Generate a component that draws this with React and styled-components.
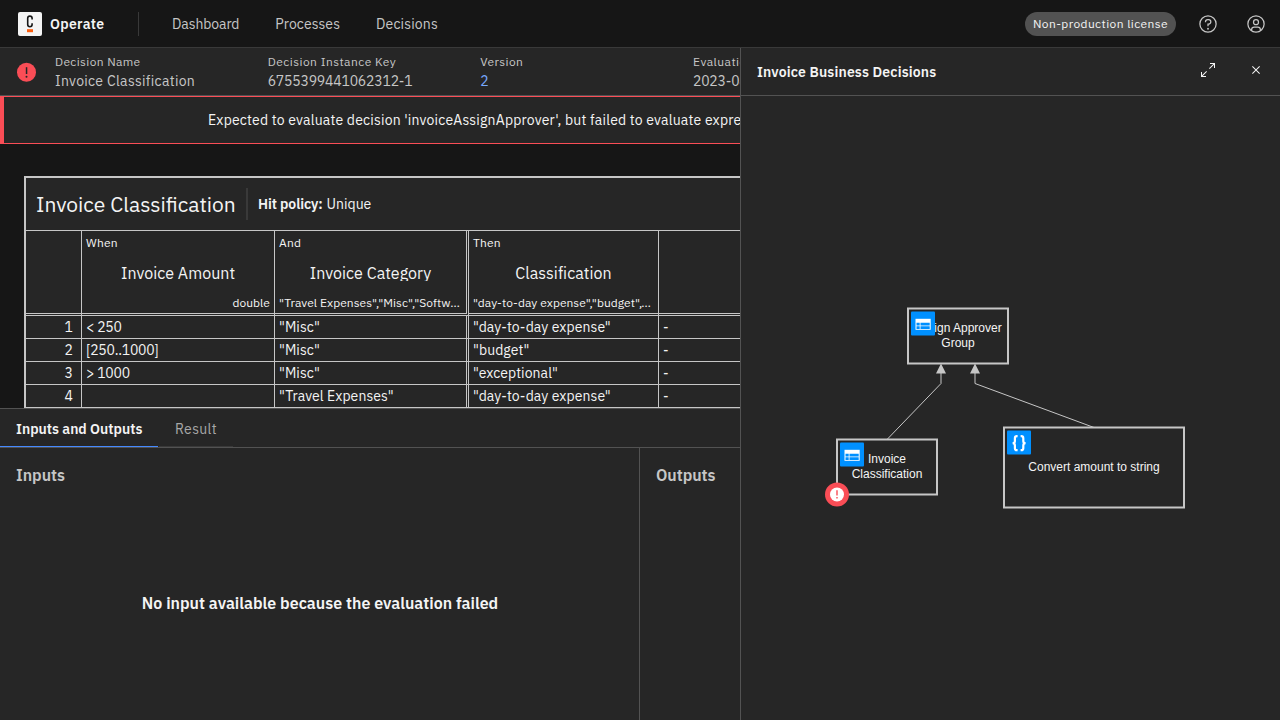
import React from "react";
import styled, { createGlobalStyle } from "styled-components";

const GlobalStyle = createGlobalStyle`
  *, *::before, *::after { box-sizing: border-box; }
  body {
    margin: 0;
    background: #161616;
    color: #f4f4f4;
    font-family: "IBM Plex Sans", Roboto, "Liberation Sans", sans-serif;
    font-size: 14px;
    line-height: 18px;
    letter-spacing: 0.16px;
  }
  svg { flex: none; }
`;

const Page = styled.div`
  display: flex;
  flex-direction: column;
  width: 1280px;
  height: 720px;
  overflow: hidden;
`;

/* Top navigation */
const Header = styled.header`
  display: flex;
  align-items: center;
  height: 48px;
  flex: none;
  padding-left: 18px;
  border-bottom: 1px solid #393939;
`;
const ProductName = styled.a`
  margin-left: 8px;
  width: 88px;
  font-weight: 600;
  letter-spacing: 0.28px;
`;
const HeaderDivider = styled.span`
  width: 1px;
  height: 24px;
  margin-right: 17px;
  background: #393939;
`;
const Nav = styled.nav`
  display: flex;
  flex: 1;
`;
const NavLink = styled.a`
  padding: 0 16px;
  margin-right: 4px;
  color: #c6c6c6;
  letter-spacing: ${(p) => p.$tracking}px;
`;
const LicenseTag = styled.span`
  display: flex;
  align-items: center;
  height: 24px;
  padding: 0 8px;
  border-radius: 12px;
  background: #525252;
  font-size: 12px;
  letter-spacing: 0.4px;
`;
const HeaderAction = styled.button`
  display: grid;
  place-items: center;
  width: 48px;
  height: 47px;
  padding: 0;
  border: 0;
  background: none;
  color: #c6c6c6;
`;
const HeaderActions = styled.div`
  display: flex;
  align-items: center;
  margin-left: 8px;
`;

/* Body */
const Body = styled.main`
  display: flex;
  flex: 1;
  min-height: 0;
`;
const Content = styled.section`
  display: flex;
  flex-direction: column;
  width: 740px;
  overflow: hidden;
`;
const InstanceHeader = styled.div`
  display: flex;
  align-items: center;
  flex: none;
  height: 48px;
  padding-left: 17px;
  background: #262626;
  border-bottom: 1px solid #525252;
`;
const Details = styled.dl`
  display: grid;
  grid-template-columns: repeat(4, 212.67px);
  flex: none;
  margin: 1px 0 0 19px;
`;
const Detail = styled.div`
  white-space: nowrap;
`;
const DetailLabel = styled.dt`
  font-size: 12px;
  line-height: 16px;
  letter-spacing: ${(p) => (p.$wide ? 0.46 : 0.36)}px;
  color: #c6c6c6;
`;
const DetailValue = styled.dd`
  margin: 1px 0 0;
  line-height: 20px;
  letter-spacing: ${(p) => (p.$numeric ? -0.2 : 0.31)}px;
  color: ${(p) => (p.$link ? "#78a9ff" : "#c6c6c6")};
`;
const ErrorBanner = styled.div`
  flex: none;
  height: 48px;
  padding-left: 204px;
  border: 1px solid #fa4d56;
  border-width: 1px 0 1px 4px;
  background: #262626;
  line-height: 46px;
  letter-spacing: 0.185px;
  white-space: nowrap;
`;
const TableViewport = styled.div`
  flex: none;
  height: 264px;
  padding: 32px 0 0 24px;
  overflow: hidden;
`;

/* Decision table */
const Decision = styled.div`
  width: 900px;
  border: 2px solid #c6c6c6;
  background: #262626;
  letter-spacing: 0;
`;
const DecisionHeader = styled.div`
  display: flex;
  align-items: center;
  height: 52px;
  padding-left: 10px;
`;
const DecisionTitle = styled.h3`
  margin: 0;
  width: 210px;
  font-size: 21px;
  font-weight: 400;
`;
const HitPolicy = styled.div`
  display: flex;
  align-items: center;
  gap: 4px;
  height: 32px;
  padding-left: 10px;
  border-left: 2px solid #393939;
`;
const HitPolicyLabel = styled.span`
  font-weight: 600;
  letter-spacing: -0.1px;
`;
const Grid = styled.table`
  border-collapse: separate;
  border-spacing: 0;
  table-layout: fixed;
  width: 896px;
`;
const Col = styled.col`
  width: ${(p) => p.$w}px;
`;
const Th = styled.th`
  height: 86px;
  padding: 0;
  vertical-align: top;
  font-weight: 400;
  text-align: left;
  border-top: 1px solid #c6c6c6;
  border-bottom: 3px double #c6c6c6;
  border-right: ${(p) => (p.$double ? "3px double" : "1px solid")} #c6c6c6;
`;
const Clause = styled.div`
  padding: 4px 4px 0;
  font-size: 12px;
  line-height: 16px;
  letter-spacing: 0.2px;
`;
const ClauseName = styled.div`
  margin-top: 13px;
  height: 17px;
  overflow: hidden;
  text-align: center;
  font-size: 16px;
  line-height: 18px;
  letter-spacing: 0.04px;
`;
const ClauseType = styled.div`
  margin-top: 14px;
  padding: 0 4px;
  font-size: 12px;
  line-height: 16px;
  letter-spacing: 0.04px;
  text-align: ${(p) => (p.$right ? "right" : "left")};
  white-space: nowrap;
  overflow: hidden;
  text-overflow: ellipsis;
`;
const Td = styled.td`
  height: 23px;
  padding: 0 ${(p) => (p.$index ? 8 : 4)}px 0 4px;
  line-height: 22px;
  letter-spacing: ${(p) => (p.$numeric ? -0.25 : 0.07)}px;
  text-align: ${(p) => (p.$index ? "right" : "left")};
  white-space: nowrap;
  border-bottom: 1px solid #c6c6c6;
  border-right: ${(p) => (p.$double ? "3px double" : "1px solid")} #c6c6c6;
`;

/* Lower panel */
const LowerPanel = styled.div`
  display: flex;
  flex-direction: column;
  flex: 1;
  background: #262626;
  border-top: 1px solid #525252;
`;
const Tabs = styled.div`
  display: flex;
  align-items: flex-end;
  gap: 1px;
  height: 39px;
  flex: none;
  border-bottom: 1px solid #525252;
`;
const Tab = styled.button`
  width: ${(p) => p.$w}px;
  height: 38px;
  padding: 3px 0 0 16px;
  border: 0;
  border-bottom: 1px solid ${(p) => (p.$selected ? "#4589ff" : "#393939")};
  background: none;
  text-align: left;
  font: inherit;
  font-weight: ${(p) => (p.$selected ? 600 : 400)};
  letter-spacing: ${(p) => (p.$selected ? 0 : 0.35)}px;
  color: ${(p) => (p.$selected ? "#f4f4f4" : "#a8a8a8")};
`;
const Panels = styled.div`
  display: flex;
  flex: 1;
`;
const Panel = styled.div`
  display: flex;
  flex-direction: column;
  width: 640px;
  flex: none;
  padding: 15px 16px 0;
  border-right: 1px solid #525252;
  font-size: 16px;
  letter-spacing: 0;
`;
const PanelTitle = styled.h2`
  margin: 0;
  font-size: 16px;
  line-height: 24px;
  font-weight: 600;
  letter-spacing: -0.05px;
  color: #c6c6c6;
`;
const EmptyMessage = styled.div`
  display: flex;
  align-items: center;
  justify-content: center;
  flex: 1;
  padding: 0 0 1px 1px;
  font-weight: 600;
  letter-spacing: 0.02px;
`;

/* Diagram side panel */
const SidePanel = styled.aside`
  display: flex;
  flex-direction: column;
  width: 540px;
  background: #262626;
  border-left: 1px solid #525252;
`;
const SideHeader = styled.div`
  display: flex;
  align-items: center;
  height: 48px;
  flex: none;
  padding-left: 16px;
  border-bottom: 1px solid #525252;
`;
const SideTitle = styled.h2`
  flex: 1;
  margin: 0;
  padding-top: 1px;
  font-size: 14px;
  font-weight: 600;
`;
const SideAction = styled(HeaderAction)`
  color: #f4f4f4;
  padding-bottom: 3px;
`;
const Diagram = styled.svg`
  display: block;
  width: 539px;
  height: 624px;
  font: 12px "Liberation Sans", Arial, sans-serif;
  letter-spacing: 0;
`;

const Icon = ({ size, children }) => (
  <svg width={size} height={size} viewBox="0 0 32 32" fill="currentColor">{children}</svg>
);

const Logo = () => (
  <svg width="24" height="24" viewBox="0 0 24 24">
    <rect width="24" height="24" rx="2" fill="#f4f4f4" />
    <path d="M14.1 7.6V6.3a2.2 2.2 0 0 0-4.4 0v6.2a2.2 2.2 0 0 0 4.4 0v-1.3" fill="none" stroke="#161616" strokeWidth="1.6" />
    <rect x="9" y="17.2" width="6" height="3" fill="#fc5d0d" />
  </svg>
);

const ErrorIcon = () => (
  <svg width="19" height="20" viewBox="0 -0.7 19 20">
    <circle cx="9.5" cy="9.5" r="9.5" fill="#fa4d56" />
    <path d="M8.8 4.5h1.5v6.8H8.8z" fill="#262626" />
    <circle cx="9.5" cy="14" r="1" fill="#262626" />
  </svg>
);

const TableBadge = ({ x, y }) => (
  <g transform={`translate(${x} ${y})`}>
    <rect width="24" height="24" rx="1" fill="#0090ff" />
    <rect x="4.5" y="7.3" width="15.2" height="11" fill="#fff" />
    <path d="M5.5 11.3h3.2v2.6H5.5zM9.5 11.3h9.2v2.6H9.5zM5.5 14.8h3.2v2.6H5.5zM9.5 14.8h9.2v2.6H9.5z" fill="#0090ff" />
  </g>
);

const Node = ({ x, y, w, h, lines, textY }) => (
  <g>
    <rect x={x} y={y} width={w} height={h} fill="#262626" stroke="#c6c6c6" strokeWidth="2" />
    {lines.map((line, i) => (
      <text key={line} x={x + w / 2} y={textY + i * 15} textAnchor="middle" fill="#f4f4f4">{line}</text>
    ))}
  </g>
);

const details = [
  { label: "Decision Name", value: "Invoice Classification" },
  { label: "Decision Instance Key", value: "6755399441062312-1", numeric: true },
  { label: "Version", value: "2", link: true },
  { label: "Evaluation Date", value: "2023-08-14 05:47:06", numeric: true },
];

const clauses = [
  ["When", "Invoice Amount", "double"],
  ["And", "Invoice Category", '"Travel Expenses","Misc","Software License Costs"'],
  ["Then", "Classification", '"day-to-day expense","budget","exceptional"'],
];

const rules = [
  ["< 250", '"Misc"', '"day-to-day expense"'],
  ["[250..1000]", '"Misc"', '"budget"'],
  ["> 1000", '"Misc"', '"exceptional"'],
  ["", '"Travel Expenses"', '"day-to-day expense"'],
];

export default function App() {
  return (
    <Page>
      <GlobalStyle />
      <Header>
        <Logo />
        <ProductName>Operate</ProductName>
        <HeaderDivider />
        <Nav>
          <NavLink $tracking={-0.1}>Dashboard</NavLink>
          <NavLink $tracking={0.08}>Processes</NavLink>
          <NavLink $tracking={0.15}>Decisions</NavLink>
        </Nav>
        <LicenseTag>Non-production license</LicenseTag>
        <HeaderActions>
          <HeaderAction aria-label="Help">
            <Icon size={20}>
              <path d="M16,2A14,14,0,1,0,30,16,14,14,0,0,0,16,2Zm0,26A12,12,0,1,1,28,16,12,12,0,0,1,16,28Z" />
              <circle cx="16" cy="23.5" r="1.5" />
              <path d="M17,8H15.5A4.49,4.49,0,0,0,11,12.5V13h2v-.5A2.5,2.5,0,0,1,15.5,10H17a2.5,2.5,0,0,1,0,5H15v4.5h2V17a4.5,4.5,0,0,0,0-9Z" />
            </Icon>
          </HeaderAction>
          <HeaderAction aria-label="Account">
            <Icon size={20}>
              <path d="M16,8a5,5,0,1,0,5,5A5,5,0,0,0,16,8Zm0,8a3,3,0,1,1,3-3A3.0034,3.0034,0,0,1,16,16Z" />
              <path d="M16,2A14,14,0,1,0,30,16,14.0158,14.0158,0,0,0,16,2ZM10,26.3765V25a3.0033,3.0033,0,0,1,3-3h6a3.0033,3.0033,0,0,1,3,3v1.3765a11.8989,11.8989,0,0,1-12,0Zm13.9925-1.4507A5.0016,5.0016,0,0,0,19,20H13a5.0016,5.0016,0,0,0-4.9925,4.9258,12,12,0,1,1,15.985,0Z" />
            </Icon>
          </HeaderAction>
        </HeaderActions>
      </Header>
      <Body>
        <Content>
          <InstanceHeader>
            <ErrorIcon />
            <Details>
              {details.map(({ label, value, link, numeric }) => (
                <Detail key={label}>
                  <DetailLabel $wide={numeric}>{label}</DetailLabel>
                  <DetailValue $link={link} $numeric={numeric}>{value}</DetailValue>
                </Detail>
              ))}
            </Details>
          </InstanceHeader>
          <ErrorBanner>
            Expected to evaluate decision 'invoiceAssignApprover', but failed to evaluate expression 'amount'
          </ErrorBanner>
          <TableViewport>
            <Decision>
              <DecisionHeader>
                <DecisionTitle>Invoice Classification</DecisionTitle>
                <HitPolicy>
                  <HitPolicyLabel>Hit policy:</HitPolicyLabel>
                  <span>Unique</span>
                </HitPolicy>
              </DecisionHeader>
              <Grid>
                <colgroup>
                  <Col $w={56} />
                  <Col $w={193} />
                  <Col $w={194} />
                  <Col $w={190} />
                  <Col $w={263} />
                </colgroup>
                <thead>
                  <tr>
                    <Th />
                    {clauses.map(([kind, name, type], i) => (
                      <Th key={kind} $double={i === 1}>
                        <Clause>{kind}</Clause>
                        <ClauseName>{name}</ClauseName>
                        <ClauseType $right={i === 0}>{type}</ClauseType>
                      </Th>
                    ))}
                    <Th />
                  </tr>
                </thead>
                <tbody>
                  {rules.map((cells, i) => (
                    <tr key={i}>
                      <Td $index>{i + 1}</Td>
                      {cells.map((cell, c) => (
                        <Td key={c} $double={c === 1} $numeric={c === 0}>{cell}</Td>
                      ))}
                      <Td>-</Td>
                    </tr>
                  ))}
                </tbody>
              </Grid>
            </Decision>
          </TableViewport>
          <LowerPanel>
            <Tabs>
              <Tab $selected $w={158}>Inputs and Outputs</Tab>
              <Tab $w={74}>Result</Tab>
            </Tabs>
            <Panels>
              <Panel>
                <PanelTitle>Inputs</PanelTitle>
                <EmptyMessage>No input available because the evaluation failed</EmptyMessage>
              </Panel>
              <Panel>
                <PanelTitle>Outputs</PanelTitle>
              </Panel>
            </Panels>
          </LowerPanel>
        </Content>
        <SidePanel>
          <SideHeader>
            <SideTitle>Invoice Business Decisions</SideTitle>
            <SideAction aria-label="Maximize">
              <Icon size={16}>
                <path d="M20 2 20 4 26.586 4 18 12.582 19.414 14 28 5.414 28 12 30 12 30 2 20 2z" />
                <path d="M14 19.416 12.592 18 4 26.586 4 20 2 20 2 30 12 30 12 28 5.414 28 14 19.416z" />
              </Icon>
            </SideAction>
            <SideAction aria-label="Close">
              <Icon size={16}>
                <path d="M17.4141 16 24 9.4141 22.5859 8 16 14.5859 9.4143 8 8 9.4141 14.5859 16 8 22.5859 9.4143 24 16 17.4141 22.5859 24 24 22.5859 17.4141 16z" />
              </Icon>
            </SideAction>
          </SideHeader>
          <Diagram viewBox="741 96 539 624">
            <g fill="none" stroke="#c6c6c6">
              <path d="M887 439.5L941 383.5V370" />
              <path d="M1094 427.5L975 383.5V370" />
            </g>
            <g fill="#c6c6c6">
              <path d="M941 363.5l5 10h-10z" />
              <path d="M975 363.5l5 10h-10z" />
            </g>
            <Node x={908} y={308.5} w={100} h={55} textY={332} lines={["Assign Approver", "Group"]} />
            <Node x={837} y={439.5} w={100} h={55} textY={463} lines={["Invoice", "Classification"]} />
            <Node x={1004} y={427.5} w={180} h={80} textY={471} lines={["Convert amount to string"]} />
            <TableBadge x={911} y={311.5} />
            <TableBadge x={840} y={442.5} />
            <rect x="1007" y="430.5" width="24" height="24" rx="1" fill="#0090ff" />
            <g fill="none" stroke="#fff" strokeWidth="2.2">
              <path d="M1017.6 436.2h-.7q-2 0-2 2v2.7q0 2.3-2.3 2.3q2.3 0 2.3 2.3v2.7q0 2 2 2h.7" />
              <path d="M1020.6 436.2h.7q2 0 2 2v2.7q0 2.3 2.3 2.3q-2.3 0-2.3 2.3v2.7q0 2-2 2h-.7" />
            </g>
            <circle cx="837" cy="494.5" r="12" fill="#fa4d56" />
            <circle cx="837" cy="494.5" r="7" fill="#fff" />
            <path d="M836.3 490.2h1.4v5.2h-1.4zM836.3 497h1.4v1.5h-1.4z" fill="#fa4d56" />
          </Diagram>
        </SidePanel>
      </Body>
    </Page>
  );
}
